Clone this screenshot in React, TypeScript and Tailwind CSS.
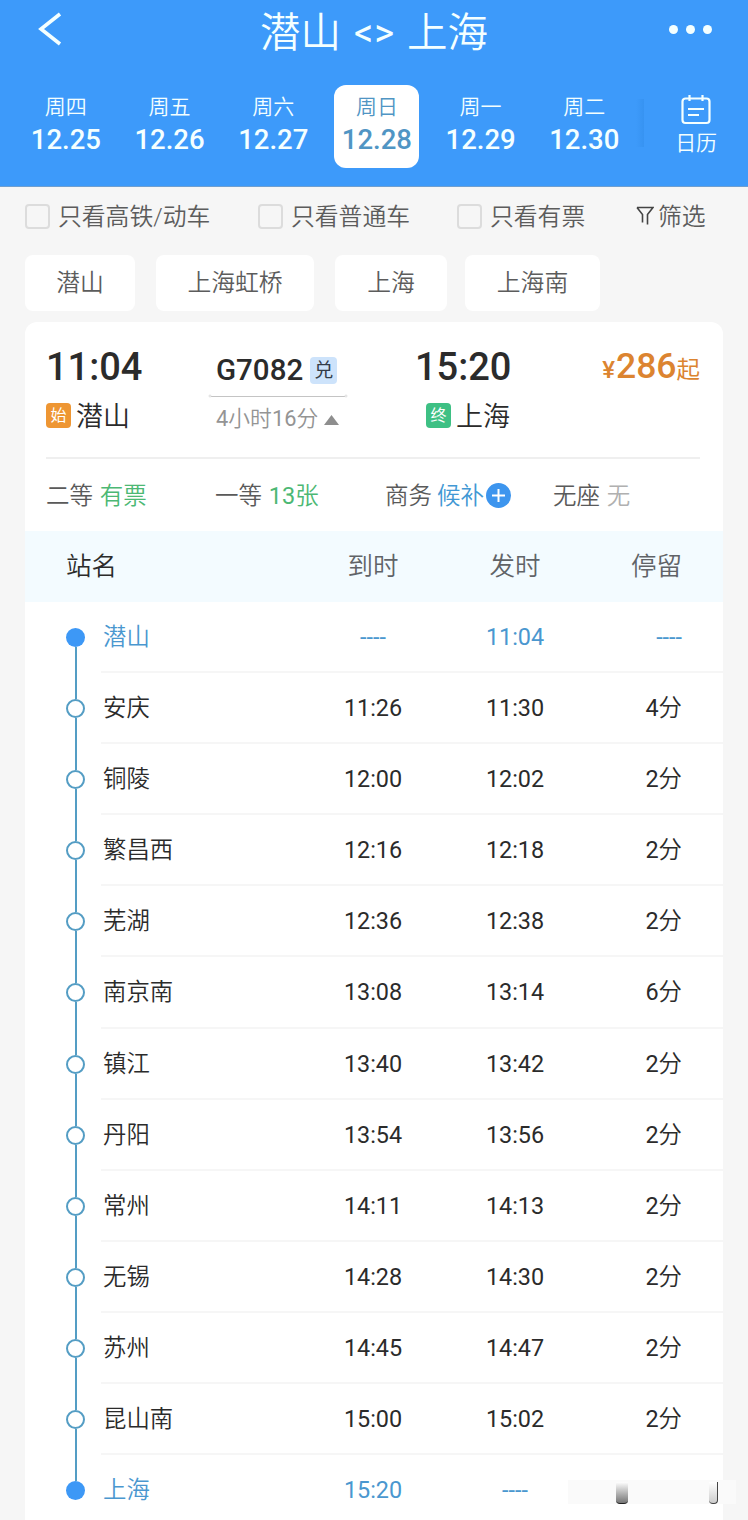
const days = [
  { week: "周四", date: "12.25" },
  { week: "周五", date: "12.26" },
  { week: "周六", date: "12.27" },
  { week: "周日", date: "12.28", active: true },
  { week: "周一", date: "12.29" },
  { week: "周二", date: "12.30" },
];

const stops = [
  { name: "潜山", arrive: "----", depart: "11:04", end: true },
  { name: "安庆", arrive: "11:26", depart: "11:30", stay: 4 },
  { name: "铜陵", arrive: "12:00", depart: "12:02", stay: 2 },
  { name: "繁昌西", arrive: "12:16", depart: "12:18", stay: 2 },
  { name: "芜湖", arrive: "12:36", depart: "12:38", stay: 2 },
  { name: "南京南", arrive: "13:08", depart: "13:14", stay: 6 },
  { name: "镇江", arrive: "13:40", depart: "13:42", stay: 2 },
  { name: "丹阳", arrive: "13:54", depart: "13:56", stay: 2 },
  { name: "常州", arrive: "14:11", depart: "14:13", stay: 2 },
  { name: "无锡", arrive: "14:28", depart: "14:30", stay: 2 },
  { name: "苏州", arrive: "14:45", depart: "14:47", stay: 2 },
  { name: "昆山南", arrive: "15:00", depart: "15:02", stay: 2 },
  { name: "上海", arrive: "15:20", depart: "----", end: true },
];

const Header = () => {
  return (
    <div className="h-[187px] bg-[#3d9afa] border-b border-[#6f9fd0] text-[#f4ffff]">
      <div className="flex items-center h-[62px] pl-[38px] pr-9">
        <svg className="w-6 h-9 -mt-1" viewBox="0 0 24 36" fill="none" stroke="currentColor" strokeWidth="3.6">
          <path d="M22 3 L3 18 L22 33" />
        </svg>
        <div className="flex flex-1 items-center text-[40.5px] leading-[62px] font-[350] pl-[198px] pt-[4px]">
          <span className="w-[94px]">潜山</span>
          <span className="w-[53px] text-[38px] tracking-[1px] font-normal">&lt;&gt;</span>
          <span>上海</span>
        </div>
        <div className="flex gap-2 -mt-1">
          <span className="size-[9px] rounded-full bg-current" />
          <span className="size-[9px] rounded-full bg-current" />
          <span className="size-[9px] rounded-full bg-current" />
        </div>
      </div>
      <div className="flex pl-[14px] pt-[23px]">
        {days.map((day) => (
          <div key={day.date} className="flex w-[103.7px] justify-center">
            <div
              className={
                day.active
                  ? "flex flex-col items-center w-[85px] h-[83px] rounded-xl bg-white text-[#5095c4]"
                  : "flex flex-col items-center w-[85px] h-[83px]"
              }
            >
              <span className="text-[21px] leading-[30px] mt-[7px] font-[350]">{day.week}</span>
              <span className="text-[27.5px] leading-[32px] font-medium mt-[2px]">{day.date}</span>
            </div>
          </div>
        ))}
        <div className="w-2 h-12 mt-[14px] bg-linear-to-r from-transparent to-[#3490ee]/70" />
        <div className="flex flex-col items-center w-[80px] pt-[9px] ml-[12px]">
          <svg className="w-[30px] h-[31px]" viewBox="0 0 30 31" fill="none" stroke="currentColor" strokeWidth="2.2">
            <rect x="1.5" y="4.5" width="27" height="24.5" rx="3" />
            <path d="M8.5 1v6M21.5 1v6M7 15h16M7 21h11" />
          </svg>
          <span className="text-[21px] leading-[30px] mt-[3px] font-[350]">日历</span>
        </div>
      </div>
    </div>
  );
};

const Check = ({ label }: { label: string }) => {
  return (
    <div className="flex items-center gap-2">
      <span className="size-[25px] rounded border-2 border-[#dcdcdc]" />
      <span className="pt-[3px]">{label}</span>
    </div>
  );
};

const Filters = () => {
  return (
    <div className="text-[23.8px] text-[#5c5c5c] font-[350]">
      <div className="flex items-center h-[58px] pl-[25px]">
        <div className="w-[233px]"><Check label="只看高铁/动车" /></div>
        <div className="w-[199px]"><Check label="只看普通车" /></div>
        <div className="w-[179px]"><Check label="只看有票" /></div>
        <svg className="w-[18px] h-5 mr-1 -mt-px" viewBox="0 0 18 20" fill="none" stroke="#444" strokeWidth="1.6">
          <path d="M1 1.5h16L11.5 8.5v10M1 1.5l5.5 7v8" />
        </svg>
        <span className="pt-[3px]">筛选</span>
      </div>
      <div className="flex pl-[25px] pt-[10px] leading-[57px] text-center">
        <span className="w-[110px] h-14 rounded-lg bg-white">潜山</span>
        <span className="w-[158px] h-14 rounded-lg bg-white ml-[21px]">上海虹桥</span>
        <span className="w-[112px] h-14 rounded-lg bg-white ml-[21px]">上海</span>
        <span className="w-[135px] h-14 rounded-lg bg-white ml-[18px]">上海南</span>
      </div>
    </div>
  );
};

const TrainSummary = () => {
  return (
    <div className="h-[209px] pl-[21px] pr-[23px]">
      <div className="flex h-[137px] border-b-2 border-[#efefef] text-[#2b2b2b]">
        <div className="w-[162px]">
          <div className="text-[38px] leading-[44px] font-medium mt-[23px]">11:04</div>
          <div className="flex items-center mt-[10px] h-9">
            <span className="size-[25px] rounded bg-[#ee9633] text-white text-[16px] leading-[25px] text-center mr-[5px] -mt-1">始</span>
            <span className="text-[27px] leading-9 font-[350]">潜山</span>
          </div>
        </div>
        <div className="w-[207px]">
          <div className="flex items-center h-10 mt-[28px] pl-2">
            <span className="text-[29.5px] font-medium">G7082</span>
            <span className="w-[27px] h-[27px] rounded bg-[#cde3fb] text-[#333c48] text-[19px] leading-[27px] text-center ml-[7px]">兑</span>
          </div>
          <svg className="w-[140px] h-[6px] mt-[3px]" viewBox="0 0 140 6" fill="none" stroke="#c4c4c4">
            <path d="M3 3.5h134" />
            <circle cx="2" cy="3" r="1" stroke="#ddd" />
            <circle cx="138" cy="3" r="1" stroke="#ddd" />
          </svg>
          <div className="flex items-center pl-2 h-8 mt-1 text-[#949494] font-[350]">
            <span className="text-[21.8px] leading-8">
              <span className="font-normal">4</span>小时<span className="font-normal">16</span>分
            </span>
            <svg className="w-[15px] h-[10px] ml-[6px] mt-[2px]" viewBox="0 0 15 10">
              <path d="M7.5 0L15 10H0z" fill="#8e8e8e" />
            </svg>
          </div>
        </div>
        <div className="w-[140px]">
          <div className="text-[38px] leading-[44px] font-medium mt-[23px]">15:20</div>
          <div className="flex items-center mt-[10px] h-9 pl-[11px]">
            <span className="size-[25px] rounded bg-[#3ec084] text-white text-[16px] leading-[25px] text-center mr-[5px] -mt-1">终</span>
            <span className="text-[27px] leading-9 font-[350]">上海</span>
          </div>
        </div>
        <div className="flex-1 flex items-baseline justify-end h-11 mt-[22px] text-[#dc8430]">
          <span className="text-[24px] font-medium mr-px">¥</span>
          <span className="text-[35.5px] leading-[44px] font-medium">286</span>
          <span className="text-[23.5px]">起</span>
        </div>
      </div>
      <div className="flex items-center h-[76px] text-[23.5px] text-[#5a5a5a] font-[350]">
        <div className="w-[169px]">二等 <span className="text-[#4cb874] ml-px">有票</span></div>
        <div className="w-[170px]">一等 <span className="text-[#4cb874] ml-px"><span className="font-normal">13</span>张</span></div>
        <div className="flex items-center w-[168px]">
          商务<span className="text-[#4298d4] ml-[5px]">候补</span>
          <svg className="size-[25px] ml-[2px] -mt-[3px]" viewBox="0 0 25 25">
            <circle cx="12.5" cy="12.5" r="12.5" fill="#3d95ee" />
            <path d="M12.5 6v13M6 12.5h13" stroke="#fff" strokeWidth="2" />
          </svg>
        </div>
        <div>无座 <span className="text-[#b0b0b0] ml-px">无</span></div>
      </div>
    </div>
  );
};

const StopTable = () => {
  return (
    <div>
      <div className="flex items-center h-[71px] bg-[#f3fbff] text-[25.5px] text-[#606367] font-[350]">
        <span className="w-[277px] pl-[41px] text-[#2b2b2b]">站名</span>
        <span className="w-[142px] text-center">到时</span>
        <span className="w-[142px] text-center">发时</span>
        <span className="w-[96px] text-right">停留</span>
      </div>
      {stops.map((stop, i) => (
        <div key={stop.name} className={stop.end ? "flex h-[71.1px] text-[#4a97cf]" : "flex h-[71.1px] text-[#2b2b2b]"}>
          <div className="flex flex-col items-center w-[25px] ml-[38px] mr-[13px]">
            <span className={i === 0 ? "w-0.5 h-[26px]" : "w-0.5 h-[26px] bg-[#549dc4]"} />
            <span className={stop.end ? "size-[19px] rounded-full bg-[#3d98f6]" : "size-[19px] rounded-full border-2 border-[#549dc4] bg-white"} />
            <span className={i === stops.length - 1 ? "w-0.5 flex-1" : "w-0.5 flex-1 bg-[#549dc4]"} />
          </div>
          <div className="flex flex-1 items-center border-b-2 border-[#f6f6f6] text-[23.4px] pt-[2px]">
            <span className="w-[201px] pl-[2px] font-[350]">{stop.name}</span>
            <span className="w-[142px] text-center">{stop.arrive}</span>
            <span className="w-[142px] text-center">{stop.depart}</span>
            <span className="w-[96px] text-right">
              {stop.stay ? <>{stop.stay}<span className="font-[350]">分</span></> : i === 0 && "----"}
            </span>
          </div>
        </div>
      ))}
    </div>
  );
};

const App = () => {
  return (
    <div className="relative w-[748px] h-[1520px] overflow-hidden bg-[#f6f6f6] font-['Roboto','Noto_Sans_CJK_SC',sans-serif]">
      <Header />
      <Filters />
      <div className="w-[698px] ml-[25px] mt-[11px] rounded-t-xl bg-white overflow-hidden">
        <TrainSummary />
        <StopTable />
      </div>
      {/* worn watermark in the corner */}
      <div className="absolute left-[568px] top-[1480px] w-[168px] h-6 bg-[#fafafa]">
        <span className="absolute left-12 top-[2px] w-3 h-[22px] rounded-b border-b border-[#222] bg-linear-to-b from-white to-[#777]" />
        <span className="absolute left-[141px] top-[2px] w-[9px] h-[22px] rounded-b border-b border-r border-[#444] bg-linear-to-b from-white to-[#ccc]" />
      </div>
    </div>
  );
};

export default App;
